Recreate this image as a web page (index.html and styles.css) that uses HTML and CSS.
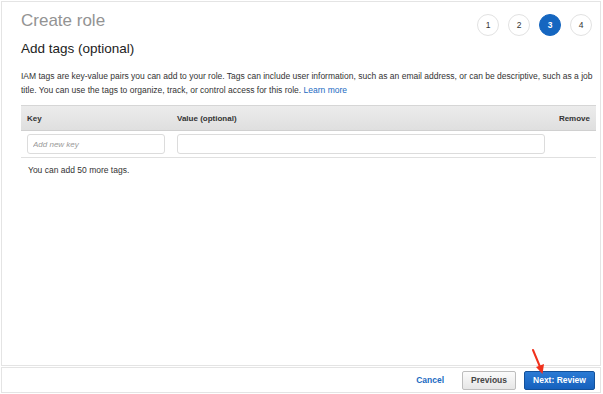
FILE: index.html
```html
<!DOCTYPE html>
<html lang="en">
<head>
    <meta charset="UTF-8">
    <meta name="viewport" content="width=device-width, initial-scale=1.0">
    <title>Create role</title>
    <link rel="stylesheet" href="styles.css">
</head>

<body>
  <div class="page">
    <section class="panel">
      <header class="panel-head">
        <h1>Create role</h1>
        <ol class="steps">
          <li>1</li>
          <li>2</li>
          <li class="active">3</li>
          <li>4</li>
        </ol>
      </header>

      <h2>Add tags (optional)</h2>
      <p class="intro">IAM tags are key-value pairs you can add to your role. Tags can include user information, such as an email address, or can be descriptive, such as a job title. You can use the tags to organize, track, or control access for this role. <a href="#">Learn more</a></p>

      <div class="tags-table">
        <div class="tags-head">
          <span>Key</span>
          <span>Value (optional)</span>
          <span class="remove">Remove</span>
        </div>
        <div class="tags-row">
          <span><input type="text" class="key-input" placeholder="Add new key"></span>
          <span><input type="text" class="value-input"></span>
          <span></span>
        </div>
      </div>

      <p class="hint">You can add 50 more tags.</p>
    </section>

    <footer class="actions">
      <a href="#" class="cancel">Cancel</a>
      <button class="btn">Previous</button>
      <button class="btn primary">Next: Review</button>
      <svg class="arrow" width="20" height="30" viewBox="0 0 20 30">
        <path d="M3 2 L10.5 20" stroke="#f0311c" stroke-width="2" fill="none" stroke-linecap="round"/>
        <path d="M6 19 L14 16 L12.5 26 Z" fill="#f0311c"/>
      </svg>
    </footer>
  </div>
</body>
</html>
```

FILE: styles.css
```css
body {
  margin: 0;
  padding: 0;
  background-color: #fff;
  font-family: 'Liberation Sans', Arial, sans-serif;
  color: #333;
}
.page {
  width: 603px;
  height: 394px;
  padding: 1px 2px 1px 1px;
  box-sizing: border-box;
  display: flex;
  flex-direction: column;
  gap: 1px;
}
.panel {
  border: 1px solid #e4e4e4;
  height: 365px;
  box-sizing: border-box;
  padding: 9px 4px 0 19px;
}
.panel-head {
  display: flex;
  justify-content: space-between;
  align-items: flex-start;
}
h1 {
  margin: 0;
  font-size: 17px;
  line-height: 20px;
  font-weight: normal;
  color: #939393;
}
.steps {
  list-style: none;
  margin: 3px 4px 0 0;
  padding: 0;
  display: flex;
  gap: 9px;
}
.steps li {
  width: 20px;
  height: 20px;
  border: 1px solid #e2e2e2;
  border-radius: 50%;
  display: flex;
  align-items: center;
  justify-content: center;
  font-size: 8.5px;
  color: #333;
  background: #fff;
}
.steps li.active {
  background: #1566c0;
  border-color: #1566c0;
  color: #fff;
  font-weight: bold;
}
h2 {
  margin: 5px 0 0;
  font-size: 13.5px;
  line-height: 16px;
  font-weight: normal;
  color: #222;
}
.intro {
  margin: 12px 0 0;
  font-size: 8.5px;
  line-height: 14px;
  color: #333;
}
.intro a {
  color: #1a6ac2;
  text-decoration: none;
}
.tags-table {
  margin-top: 8px;
}
.tags-head, .tags-row {
  display: grid;
  grid-template-columns: 150px 1fr 50px;
  align-items: center;
}
.tags-head {
  height: 26px;
  background: linear-gradient(#ececec, #dfdfdf);
  border-top: 1px solid #d6d6d6;
  border-bottom: 1px solid #d0d0d0;
  box-sizing: border-box;
  font-size: 8px;
  font-weight: bold;
  color: #333;
}
.tags-head span {
  padding-left: 6px;
}
.tags-head .remove {
  padding: 0 6px 0 0;
  text-align: right;
}
.tags-row {
  height: 26px;
  border-bottom: 1px solid #e0e0e0;
}
.tags-row span {
  padding-left: 6px;
  display: flex;
}
.tags-row input {
  height: 20px;
  box-sizing: border-box;
  border: 1px solid #dcdcdc;
  border-radius: 3px;
  padding: 0 5px;
  font-family: inherit;
  font-size: 8px;
  margin: 0;
}
.tags-row input::placeholder {
  color: #999;
  font-style: italic;
}
.key-input {
  width: 138px;
}
.value-input {
  flex: 1;
  margin-right: 1px !important;
}
.hint {
  margin: 5px 0 0 7px;
  font-size: 8.5px;
  line-height: 14px;
  color: #333;
}
.actions {
  position: relative;
  flex: 1;
  border: 1px solid #e4e4e4;
  display: flex;
  align-items: center;
  justify-content: flex-end;
  padding-right: 5px;
  gap: 8px;
}
.cancel {
  color: #1a6ac2;
  font-size: 8.5px;
  font-weight: bold;
  text-decoration: none;
  margin-right: 10px;
}
.btn {
  height: 19px;
  padding: 0 8px;
  border: 1px solid #bdbdbd;
  border-radius: 2px;
  background: linear-gradient(#fbfbfb, #e6e6e6);
  font-family: inherit;
  font-size: 8.5px;
  font-weight: bold;
  color: #444;
  cursor: pointer;
}
.btn.primary {
  width: 71px;
  padding: 0;
  border-color: #12509a;
  background: linear-gradient(#2b7ad4, #1661bd);
  color: #fff;
}
.arrow {
  position: absolute;
  left: 528px;
  top: -20px;
}
```
